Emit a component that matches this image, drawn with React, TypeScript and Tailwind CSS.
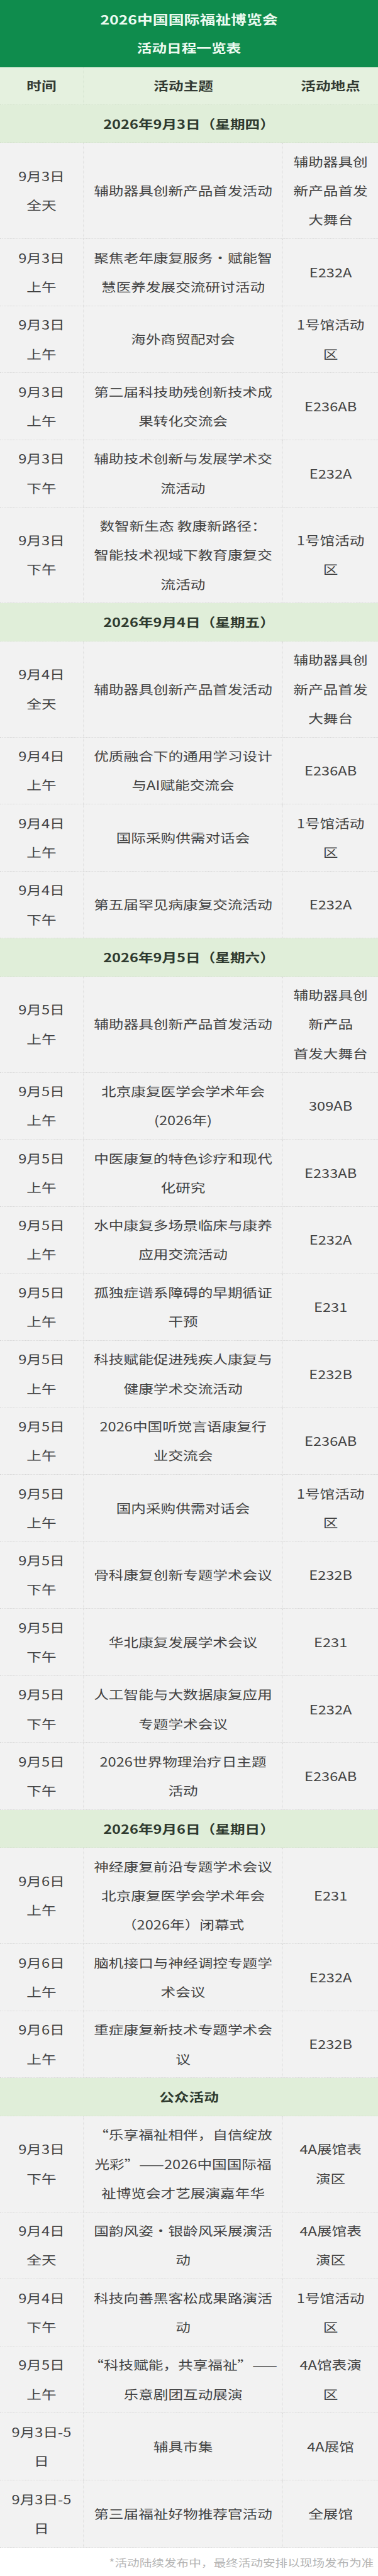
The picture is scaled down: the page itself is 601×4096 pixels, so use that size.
type Row = { time: string[]; topic: string[]; place: string[] };
type Section = { title: string; rows: Row[] };

const sections: Section[] = [
  {
    title: "2026年9月3日（星期四）",
    rows: [
      { time: ["9月3日", "全天"], topic: ["辅助器具创新产品首发活动"], place: ["辅助器具创", "新产品首发", "大舞台"] },
      { time: ["9月3日", "上午"], topic: ["聚焦老年康复服务·赋能智", "慧医养发展交流研讨活动"], place: ["E232A"] },
      { time: ["9月3日", "上午"], topic: ["海外商贸配对会"], place: ["1号馆活动", "区"] },
      { time: ["9月3日", "上午"], topic: ["第二届科技助残创新技术成", "果转化交流会"], place: ["E236AB"] },
      { time: ["9月3日", "下午"], topic: ["辅助技术创新与发展学术交", "流活动"], place: ["E232A"] },
      { time: ["9月3日", "下午"], topic: ["数智新生态 教康新路径：", "智能技术视域下教育康复交", "流活动"], place: ["1号馆活动", "区"] },
    ],
  },
  {
    title: "2026年9月4日（星期五）",
    rows: [
      { time: ["9月4日", "全天"], topic: ["辅助器具创新产品首发活动"], place: ["辅助器具创", "新产品首发", "大舞台"] },
      { time: ["9月4日", "上午"], topic: ["优质融合下的通用学习设计", "与AI赋能交流会"], place: ["E236AB"] },
      { time: ["9月4日", "上午"], topic: ["国际采购供需对话会"], place: ["1号馆活动", "区"] },
      { time: ["9月4日", "下午"], topic: ["第五届罕见病康复交流活动"], place: ["E232A"] },
    ],
  },
  {
    title: "2026年9月5日（星期六）",
    rows: [
      { time: ["9月5日", "上午"], topic: ["辅助器具创新产品首发活动"], place: ["辅助器具创", "新产品", "首发大舞台"] },
      { time: ["9月5日", "上午"], topic: ["北京康复医学会学术年会", "(2026年)"], place: ["309AB"] },
      { time: ["9月5日", "上午"], topic: ["中医康复的特色诊疗和现代", "化研究"], place: ["E233AB"] },
      { time: ["9月5日", "上午"], topic: ["水中康复多场景临床与康养", "应用交流活动"], place: ["E232A"] },
      { time: ["9月5日", "上午"], topic: ["孤独症谱系障碍的早期循证", "干预"], place: ["E231"] },
      { time: ["9月5日", "上午"], topic: ["科技赋能促进残疾人康复与", "健康学术交流活动"], place: ["E232B"] },
      { time: ["9月5日", "上午"], topic: ["2026中国听觉言语康复行", "业交流会"], place: ["E236AB"] },
      { time: ["9月5日", "上午"], topic: ["国内采购供需对话会"], place: ["1号馆活动", "区"] },
      { time: ["9月5日", "下午"], topic: ["骨科康复创新专题学术会议"], place: ["E232B"] },
      { time: ["9月5日", "下午"], topic: ["华北康复发展学术会议"], place: ["E231"] },
      { time: ["9月5日", "下午"], topic: ["人工智能与大数据康复应用", "专题学术会议"], place: ["E232A"] },
      { time: ["9月5日", "下午"], topic: ["2026世界物理治疗日主题", "活动"], place: ["E236AB"] },
    ],
  },
  {
    title: "2026年9月6日（星期日）",
    rows: [
      { time: ["9月6日", "上午"], topic: ["神经康复前沿专题学术会议", "北京康复医学会学术年会", "（2026年）闭幕式"], place: ["E231"] },
      { time: ["9月6日", "上午"], topic: ["脑机接口与神经调控专题学", "术会议"], place: ["E232A"] },
      { time: ["9月6日", "上午"], topic: ["重症康复新技术专题学术会", "议"], place: ["E232B"] },
    ],
  },
  {
    title: "公众活动",
    rows: [
      { time: ["9月3日", "下午"], topic: ["“乐享福祉相伴，自信绽放", "光彩”——2026中国国际福", "祉博览会才艺展演嘉年华"], place: ["4A展馆表", "演区"] },
      { time: ["9月4日", "全天"], topic: ["国韵风姿·银龄风采展演活", "动"], place: ["4A展馆表", "演区"] },
      { time: ["9月4日", "下午"], topic: ["科技向善黑客松成果路演活", "动"], place: ["1号馆活动", "区"] },
      { time: ["9月5日", "上午"], topic: ["“科技赋能，共享福祉”——", "乐意剧团互动展演"], place: ["4A馆表演", "区"] },
      { time: ["9月3日-5", "日"], topic: ["辅具市集"], place: ["4A展馆"] },
      { time: ["9月3日-5", "日"], topic: ["第三届福祉好物推荐官活动"], place: ["全展馆"] },
    ],
  },
];

function Lines({ lines }: { lines: string[] }) {
  return (
    <div>
      {lines.map((line, i) => (
        <div key={i} className="whitespace-nowrap">
          {line}
        </div>
      ))}
    </div>
  );
}

function ScheduleRow({ row }: { row: Row }) {
  return (
    <div className="grid grid-cols-[109.8px_261.7px_1fr] border-b border-dotted border-[#d6d6d6] bg-[#f2f2f2] text-[#424242]">
      <div className="flex items-center justify-center border-r border-dotted border-[#dedede] py-[6.57px] text-center">
        <Lines lines={row.time} />
      </div>
      <div className="flex items-center justify-center border-r border-dotted border-[#dedede] py-[6.57px] text-center">
        <Lines lines={row.topic} />
      </div>
      <div className="flex items-center justify-center py-[6.57px] text-center">
        <Lines lines={row.place} />
      </div>
    </div>
  );
}

export default function App() {
  return (
    <div className="w-[601px] overflow-hidden bg-white font-['Noto_Sans_CJK_SC','Noto_Sans',sans-serif] text-[19.5px] leading-[46.23px]">
      <div className="w-[495.9px] origin-top-left scale-x-[1.212]">
        <div className="bg-[#0f8c4d] py-[7.07px] text-center font-bold text-[#ecfaf0]">
          <div className="text-[20.5px]">2026中国国际福祉博览会</div>
          <div>活动日程一览表</div>
        </div>

        <div className="grid grid-cols-[109.8px_261.7px_1fr] border-b border-dotted border-[#d3e2cc] bg-[#e5f1df] font-bold text-[#333a33]">
          <div className="border-r border-dotted border-[#d8e6d2] py-[6.57px] text-center">时间</div>
          <div className="py-[6.57px] text-center">活动主题</div>
          <div className="py-[6.57px] text-center">活动地点</div>
        </div>

        {sections.map((section) => (
          <div key={section.title}>
            <div className="border-b border-dotted border-[#d3e2cc] bg-[#e0eed9] py-[6.57px] text-center font-bold text-[#2f3a2f]">
              {section.title}
            </div>
            {section.rows.map((row, i) => (
              <ScheduleRow key={i} row={row} />
            ))}
          </div>
        ))}

        <div className="h-[46px] whitespace-nowrap pl-[143px] text-[16.2px] leading-[46px] text-[#b5b5b5]">
          *活动陆续发布中，最终活动安排以现场发布为准
        </div>
      </div>
    </div>
  );
}
